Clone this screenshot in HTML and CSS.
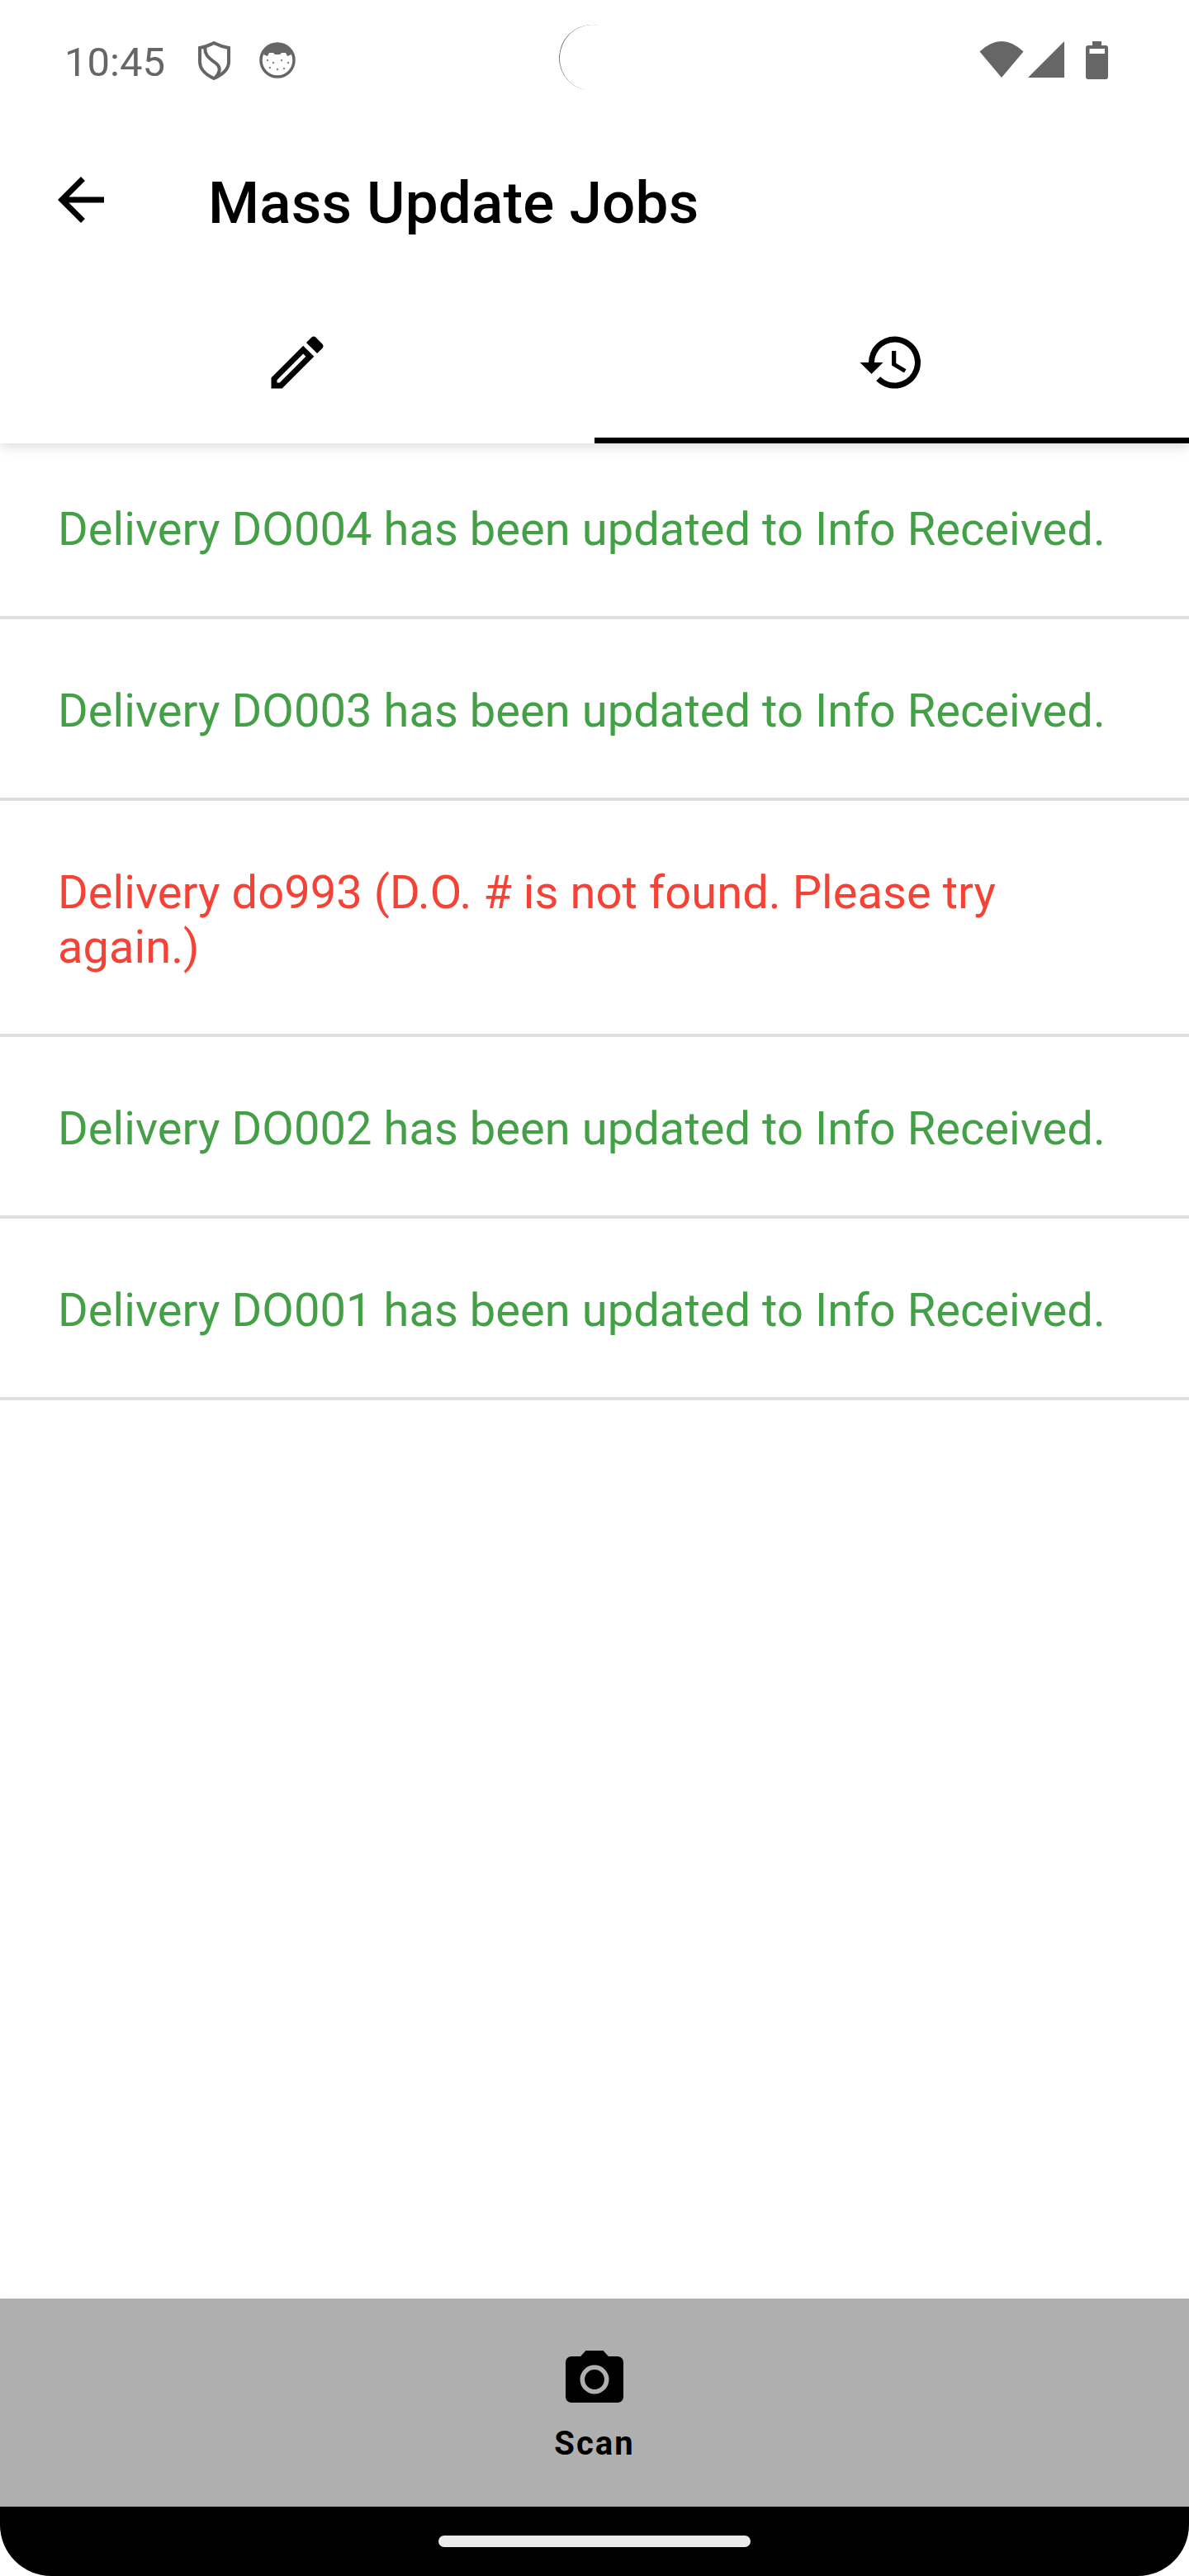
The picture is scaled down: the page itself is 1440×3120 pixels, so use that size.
FILE: index.html
```html
<!DOCTYPE html>
<html>
<head>
  <title>Mass Update Jobs</title>
  <link rel="stylesheet" href="styles.css">
</head>
<body>

<div class="screen">

  <div class="status-bar">
    <div class="status-left">
      <span class="clock">10:45</span>
      <svg class="shield" viewBox="0 0 39 47">
        <path d="M19 2C25 5 31 7 37 8V25C37 34 28 41 19 45C10 41 2 34 2 25V8C8 7 13 5 19 2Z" fill="none" stroke="#666" stroke-width="4"/>
        <path d="M9 6C6 16 14 21 22 27C28 32 26 38 21 44" fill="none" stroke="#666" stroke-width="4"/>
      </svg>
      <svg class="face" viewBox="0 0 44 44">
        <circle cx="22" cy="22" r="20" fill="#fff" stroke="#666" stroke-width="3.5"/>
        <path d="M7 10C12 0 32 0 37 10L39 15L34 17L32 13L27 13L25 15L19 15L17 13L12 13L10 17L5 15Z" fill="#666"/>
        <g fill="#888">
          <circle cx="10" cy="22" r="1.2"/>
          <circle cx="17" cy="25" r="1.2"/>
          <circle cx="27" cy="22" r="1.2"/>
          <circle cx="35" cy="25" r="1.2"/>
          <circle cx="13" cy="31" r="1.2"/>
          <circle cx="22" cy="33" r="1.2"/>
          <circle cx="30" cy="32" r="1.2"/>
        </g>
      </svg>
    </div>
    <div class="status-right">
      <svg class="wifi" viewBox="0 0 54 44"><path d="M.5 12.5Q27-12.5 53.5 12.5L27 44Z" fill="#666"/></svg>
      <svg class="signal" viewBox="0 0 44 44"><path d="M44 0V44H0Z" fill="#666"/></svg>
      <svg class="battery" viewBox="0 0 27 46">
        <path d="M8 0H19V5H24Q27 5 27 8V43Q27 46 24 46H3Q0 46 0 43V8Q0 5 3 5H8Z" fill="#666"/>
        <rect x="4.5" y="9" width="18.5" height="6" fill="#fff"/>
      </svg>
    </div>
  </div>

  <div class="cutout"></div>

  <header class="app-bar">
    <button class="back-btn">
      <svg viewBox="0 0 24 24" width="84" height="84"><path d="M20 11H7.83l5.59-5.59L12 4l-8 8 8 8 1.41-1.41L7.83 13H20v-2z" fill="#000"/></svg>
    </button>
    <h1 class="title">Mass Update Jobs</h1>
  </header>

  <nav class="tabs">
    <div class="tab">
      <svg viewBox="0 0 24 24" width="84" height="84"><path d="M14.06 9.02l.92.92L5.92 19H5v-.92l9.06-9.06M17.66 3c-.25 0-.51.1-.7.29l-1.83 1.83 3.75 3.75 1.83-1.83c.39-.39.39-1.02 0-1.41l-2.34-2.34c-.2-.2-.45-.29-.71-.29zm-3.6 3.19L3 17.25V21h3.75L17.81 9.94l-3.75-3.75z" fill="#000"/></svg>
    </div>
    <div class="tab tab-active">
      <svg viewBox="0 0 24 24" width="84" height="84"><path d="M13 3a9 9 0 0 0-9 9H1l3.89 3.89.07.14L9 12H6a7 7 0 1 1 2.05 4.95l-1.42 1.42A9 9 0 1 0 13 3zm-1 5v5l4.28 2.54.72-1.21-3.5-2.08V8H12z" fill="#000"/></svg>
    </div>
  </nav>

  <main class="log-list">
    <div class="log-row ok">Delivery DO004 has been updated to Info Received.</div>
    <div class="log-row ok">Delivery DO003 has been updated to Info Received.</div>
    <div class="log-row err">Delivery do993 (D.O. # is not found. Please try again.)</div>
    <div class="log-row ok">Delivery DO002 has been updated to Info Received.</div>
    <div class="log-row ok">Delivery DO001 has been updated to Info Received.</div>
  </main>

  <div class="scan-bar">
    <svg viewBox="0 0 24 24" width="84" height="84"><path d="M9 2 7.17 4H4a2 2 0 0 0-2 2v12a2 2 0 0 0 2 2h16a2 2 0 0 0 2-2V6a2 2 0 0 0-2-2h-3.17L15 2H9zm3 15a5 5 0 1 1 0-10 5 5 0 0 1 0 10zm0-1.6a3.4 3.4 0 1 0 0-6.8 3.4 3.4 0 0 0 0 6.8z" fill="#000" fill-rule="evenodd"/></svg>
    <span class="scan-label">Scan</span>
  </div>

  <div class="nav-bar">
    <div class="home-pill"></div>
  </div>

</div>

</body>
</html>
```

FILE: styles.css
```css
html, body {
  margin: 0;
  padding: 0;
  background: #fff;
}

.screen {
  position: relative;
  width: 1440px;
  height: 3120px;
  display: flex;
  flex-direction: column;
  font-family: Roboto, sans-serif;
  overflow: hidden;
}

.status-bar {
  height: 144px;
  flex: none;
  box-sizing: border-box;
  padding: 50px 98px 0 78px;
  display: flex;
  justify-content: space-between;
  align-items: flex-start;
}

.status-left {
  display: flex;
  align-items: flex-start;
}

.clock {
  font-size: 49px;
  line-height: 48px;
  margin-top: 2px;
  color: #666;
  width: 162px;
}

.shield {
  width: 39px;
  height: 47px;
}

.face {
  width: 44px;
  height: 44px;
  margin-left: 35px;
  margin-top: 1px;
}

.status-right {
  display: flex;
  align-items: flex-start;
}

.wifi {
  width: 54px;
  height: 44px;
}

.signal {
  width: 44px;
  height: 44px;
  margin-left: 5px;
}

.battery {
  width: 27px;
  height: 46px;
  margin-left: 26px;
}

.cutout {
  position: absolute;
  left: 677px;
  top: 30px;
  width: 80px;
  height: 80px;
  border-radius: 50%;
  border-left: 1px solid #777;
  box-sizing: border-box;
  transform: rotate(12deg);
}

.app-bar {
  height: 196px;
  flex: none;
  display: flex;
  align-items: center;
}

.back-btn {
  width: 252px;
  height: 84px;
  flex: none;
  box-sizing: border-box;
  padding: 0 0 0 56px;
  background: none;
  border: none;
  display: flex;
  align-items: center;
}

.title {
  margin: 0;
  padding-top: 7px;
  font-size: 71px;
  font-weight: 500;
  letter-spacing: 0.2px;
  color: #000;
}

/* shadow only falls below the strip */
.tabs {
  height: 197px;
  flex: none;
  display: flex;
  position: relative;
  z-index: 1;
  background: #fff;
  box-shadow: 0 4px 14px rgba(0, 0, 0, 0.14);
  clip-path: inset(0 0 -40px 0);
}

.tab {
  flex: 1;
  display: flex;
  align-items: center;
  justify-content: center;
  box-sizing: border-box;
  padding-top: 7px;
  border-bottom: 7px solid transparent;
}

.tab-active {
  border-bottom-color: #000;
}

/* first row slides 7px under the tab strip */
.log-list {
  flex: 1;
  margin-top: -7px;
}

.log-row {
  padding: 78px 70px 72px 70px;
  font-size: 56px;
  line-height: 66px;
  letter-spacing: 0.06px;
  border-bottom: 4px solid #dedede;
}

.log-row.ok {
  color: #43a047;
}

.log-row.err {
  color: #f44336;
}

.scan-bar {
  height: 252px;
  flex: none;
  box-sizing: border-box;
  padding-top: 56px;
  background: #afafaf;
  display: flex;
  flex-direction: column;
  align-items: center;
  box-shadow: 0 -2px 6px rgba(0, 0, 0, 0.03);
}

.scan-label {
  font-size: 40px;
  font-weight: 700;
  letter-spacing: 2px;
  color: #000;
  margin-top: 12px;
}

.nav-bar {
  height: 84px;
  flex: none;
  box-sizing: border-box;
  padding-top: 35px;
  background: #000;
  border-radius: 0 0 62px 62px;
  display: flex;
  justify-content: center;
}

.home-pill {
  width: 378px;
  height: 14px;
  border-radius: 7px;
  background: #ebebeb;
}
```
